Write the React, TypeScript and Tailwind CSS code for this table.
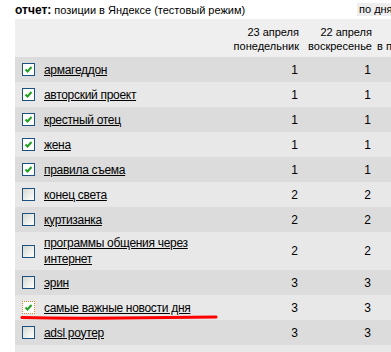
import React from "react";

type Row = { name: string; on: boolean; a: number; b: number; focus?: boolean; h?: string };

const rows: Row[] = [
  { name: "армагеддон", on: true, a: 1, b: 1 },
  { name: "авторский проект", on: true, a: 1, b: 1 },
  { name: "крестный отец", on: true, a: 1, b: 1 },
  { name: "жена", on: true, a: 1, b: 1 },
  { name: "правила съема", on: true, a: 1, b: 1 },
  { name: "конец света", on: false, a: 2, b: 2 },
  { name: "куртизанка", on: false, a: 2, b: 2 },
  { name: "программы общения через интернет", on: false, a: 2, b: 2, h: "h-[38px]" },
  { name: "эрин", on: false, a: 3, b: 3 },
  { name: "самые важные новости дня", on: true, a: 3, b: 3, focus: true },
  { name: "adsl роутер", on: false, a: 3, b: 3 },
  { name: "", on: false, a: 0, b: 0 },
];

function Box({ on, focus }: { on: boolean; focus?: boolean }) {
  return (
    <div
      className={
        "w-[13px] h-[13px] shrink-0 border " +
        (focus ? "border-dotted border-[#d9822b] " : "border-[#1c5180] ") +
        (on ? "bg-white" : "bg-gradient-to-br from-[#d8d8d2] to-white")
      }
    >
      {on && (
        <svg width="11" height="11" viewBox="0 0 11 11">
          <path d="M2.5 5.5 L4.5 7.5 L8.5 3" fill="none" stroke="#21a121" strokeWidth="2" />
        </svg>
      )}
    </div>
  );
}

export default function App() {
  return (
    <div className="relative w-[391px] h-[352px] overflow-hidden bg-white text-black font-['Liberation_Sans',Arial,sans-serif] text-[11px]">
      {/* title bar */}
      <div className="flex items-center h-[19px] pl-[15px] text-[11px]">
        <span>
          <b className="text-[12px]">отчет:</b> позиции в Яндексе (тестовый режим)
        </span>
        <span className="ml-auto bg-[#eeeeee] pl-[2px] text-[11px] leading-[13px] w-[34px] overflow-hidden whitespace-nowrap">
          по дням
        </span>
      </div>

      {/* report table */}
      <div className="ml-[15px] w-[440px]">
        <div className="flex h-[38px] bg-[#efefef] leading-[14px] text-[11px]">
          <div className="w-[214px] shrink-0" />
          <div className="w-[73px] shrink-0 text-right pr-[3px] pt-[6px] whitespace-nowrap">
            <div>23 апреля</div>
            <div>понедельник</div>
          </div>
          <div className="w-[73px] shrink-0 text-right pr-[3px] pt-[6px] whitespace-nowrap">
            <div>22 апреля</div>
            <div>воскресенье</div>
          </div>
          <div className="shrink-0 pl-[2px] pt-[20px] whitespace-nowrap">в понедельник</div>
        </div>

        {rows.map((r, i) => (
          <div
            key={i}
            className={
              "flex items-center leading-[16px] " +
              (r.h ?? "h-[25px]") +
              (i % 2 === 0 ? " bg-[#dcdcdc]" : " bg-[#e8e8e8]")
            }
          >
            <div className="w-[214px] shrink-0 flex items-center pl-[7px]">
              {r.name && <Box on={r.on} focus={r.focus} />}
              <span className="ml-[9px] underline w-[150px] text-[12px] tracking-[-0.3px]">{r.name}</span>
            </div>
            <div className="w-[73px] shrink-0 text-right pr-[4px] text-[12px]">{r.a || ""}</div>
            <div className="w-[73px] shrink-0 text-right pr-[4px] text-[12px]">{r.b || ""}</div>
          </div>
        ))}
      </div>

      {/* hand-drawn red marker under a row */}
      <svg className="absolute left-0 top-0 pointer-events-none" width="391" height="352">
        <path d="M22 317.5 Q60 318.5 120 318 L216 317" fill="none" stroke="#ff0000" strokeWidth="3" strokeLinecap="round" />
      </svg>
    </div>
  );
}
